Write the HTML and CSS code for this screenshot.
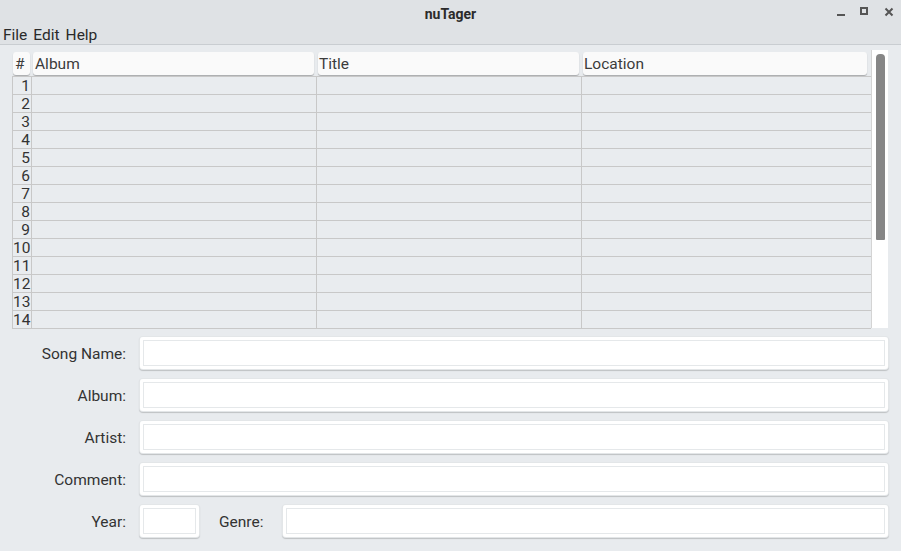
FILE: index.html
```html
<!DOCTYPE html>
<html>
<head>
<meta charset="utf-8">
<link rel="stylesheet" href="styles.css">
</head>
<body>
<div class="window">
  <div class="titlebar">
    <div class="title">nuTager</div>
    <div class="wbtns">
      <svg width="12" height="12" viewBox="0 0 12 12"><rect x="2" y="8" width="8" height="2" fill="#555"/></svg>
      <svg width="12" height="12" viewBox="0 0 12 12"><rect x="2" y="2" width="6" height="6" fill="none" stroke="#555" stroke-width="2"/></svg>
      <svg width="12" height="12" viewBox="0 0 12 12"><path d="M2.5 2.5 L9.5 9.5 M9.5 2.5 L2.5 9.5" stroke="#555" stroke-width="2"/></svg>
    </div>
  </div>
  <div class="menubar"><span>File</span><span>Edit</span><span>Help</span></div>
  <div class="content">
    <div class="tablewrap">
      <div class="table">
        <div class="hrow">
          <div class="hcell hnum">#</div>
          <div class="hcell">Album</div>
          <div class="hcell">Title</div>
          <div class="hcell">Location</div>
        </div>
        <div class="rows" id="rows"></div>
      </div>
      <div class="scroll"><div class="thumb"></div></div>
    </div>
    <div class="form">
      <div class="frow"><label class="lbl">Song Name:</label><div class="inp grow"></div></div>
      <div class="frow"><label class="lbl">Album:</label><div class="inp grow"></div></div>
      <div class="frow"><label class="lbl">Artist:</label><div class="inp grow"></div></div>
      <div class="frow"><label class="lbl">Comment:</label><div class="inp grow"></div></div>
      <div class="frow"><label class="lbl">Year:</label><div class="inp year"></div><label class="lbl2">Genre:</label><div class="inp grow"></div></div>
    </div>
  </div>
</div>
<script>
var r = document.getElementById('rows');
for (var i = 1; i <= 14; i++) {
  var row = document.createElement('div');
  row.className = 'row';
  row.innerHTML = '<div class="cell num">' + i + '</div><div class="cell"></div><div class="cell"></div><div class="cell"></div>';
  r.appendChild(row);
}
</script>
</body>
</html>
```
FILE: styles.css
```css
html, body { margin: 0; padding: 0; }
body {
  width: 901px; height: 551px; overflow: hidden;
  background: #e8ebee;
  font-family: Roboto, "Noto Sans", sans-serif;
  font-size: 15.5px;
  color: #333;
}
.window { display: flex; flex-direction: column; height: 551px; }
.titlebar {
  height: 27px; background: #dfe2e5; position: relative;
  display: flex; align-items: center; justify-content: center;
}
.title { font-weight: bold; font-size: 14px; color: #2b2b2b; }
.wbtns { position: absolute; right: 6px; top: 6px; display: flex; gap: 12px; }
.wbtns svg { display: block; }
.menubar {
  height: 17px; background: #dfe2e5; border-bottom: 1px solid #c9cdd1;
  display: flex; gap: 6px; padding-left: 3px; line-height: 17px; color: #2a2a2a;
}
.content { padding: 5px 13px 0 12px; }
.tablewrap { display: flex; height: 278px; }
.table { width: 859px; display: flex; flex-direction: column; border-right: 1px solid #d4d4d4; }
.hrow, .row { display: grid; grid-template-columns: 19px 285px 265px 289px; }
.hrow { height: 26px; }
.hcell {
  margin: 2px 2px 2px 2px; background: #fafafa; border-radius: 3px;
  box-shadow: 0 1px 1px rgba(0,0,0,0.28);
  padding-left: 2px; padding-top: 1px; box-sizing: border-box; line-height: 22px; color: #3c3c3c;
}
.hnum { margin-left: 1px; margin-right: 1px; }
.hrow .hcell:nth-child(3) { padding-left: 1px; }
.hrow .hcell:nth-child(4) { margin-right: 3px; padding-left: 1px; }
.rows { border-top: 1px solid #c8c8c8; border-left: 1px solid #c8c8c8; }
.row { height: 18px; grid-template-rows: 18px; }
.cell {
  box-sizing: border-box; height: 18px;
  border-right: 1px solid #c8c8c8; border-bottom: 1px solid #c8c8c8; background: #e9ecef;
}
.row .cell:last-child { border-right: none; }
.num { text-align: right; line-height: 19px; padding-right: 1px; color: #333; overflow: visible; }
.scroll { width: 17px; background: #fff; position: relative; }
.thumb {
  position: absolute; left: 4px; top: 4px; width: 9px; height: 186px;
  background: #868686; border-radius: 4px 4px 1px 1px;
}
.form { display: flex; flex-direction: column; gap: 10px; margin-top: 9px; }
.frow { display: flex; align-items: center; height: 32px; }
.lbl { width: 114px; text-align: right; margin-right: 14px; color: #333; padding-top: 2px; }
.lbl2 { margin: 0 20px 0 20px; color: #333; padding-top: 2px; }
.inp {
  height: 32px; background: #fff; border-radius: 3px;
  box-shadow: inset 0 0 0 3px #fff, inset 0 0 0 4px #e5e8ea, 0 0 0 1px #e3e6e8, 0 1px 1px 1px rgba(0,0,0,0.18);
  box-sizing: border-box;
}
.grow { flex: 1; }
.year { width: 59px; }
```
